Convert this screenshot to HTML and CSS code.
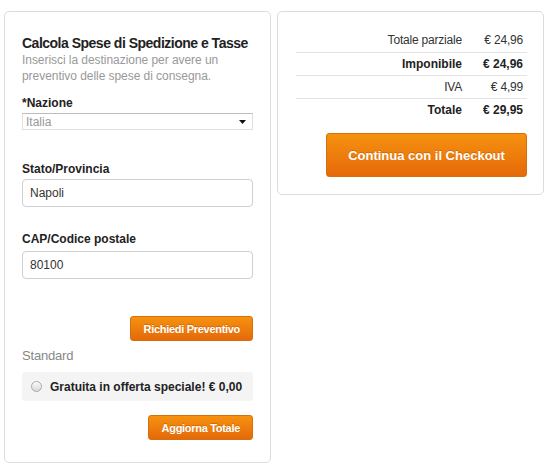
FILE: index.html
```html
<!DOCTYPE html>
<html>
<head lang="it">
    <meta charset="UTF-8">
    <title>Carrello</title>
    <link rel="stylesheet" href="styles.css">
</head>
<body>
<div class="cart">
    <!-- stima spedizione -->
    <div class="box shipping">
        <h2 class="box-title">Calcola Spese di Spedizione e Tasse</h2>
        <p class="hint">Inserisci la destinazione per avere un preventivo delle spese di consegna.</p>

        <label class="field-label">*Nazione</label>
        <div class="fake-select">
            <span>Italia</span>
            <svg width="7" height="4" viewBox="0 0 7 4"><path d="M0 0h7L3.5 4z" fill="#111"/></svg>
        </div>

        <label class="field-label first-input">Stato/Provincia</label>
        <input class="text-input" type="text" value="Napoli">

        <label class="field-label second-input">CAP/Codice postale</label>
        <input class="text-input" type="text" value="80100">

        <div class="actions quote-row">
            <button class="btn btn-small">Richiedi Preventivo</button>
        </div>

        <div class="method-name">Standard</div>
        <div class="method">
            <span class="radio"></span>
            <span>Gratuita in offerta speciale! € 0,00</span>
        </div>

        <div class="actions update-row">
            <button class="btn btn-small">Aggiorna Totale</button>
        </div>
    </div>

    <!-- totali -->
    <div class="box totals">
        <table class="totals-table">
            <tr><td>Totale parziale</td><td class="amount">€ 24,96</td></tr>
            <tr class="strong"><td>Imponibile</td><td class="amount">€ 24,96</td></tr>
            <tr><td>IVA</td><td class="amount">€ 4,99</td></tr>
            <tr class="strong last"><td>Totale</td><td class="amount">€ 29,95</td></tr>
        </table>
        <div class="actions checkout-row">
            <button class="btn btn-big">Continua con il Checkout</button>
        </div>
    </div>
</div>
</body>
</html>
```

FILE: styles.css
```css
*{ margin:0; padding:0; box-sizing:border-box; }
body{ background:#fff; font-family:"Liberation Sans", Arial, sans-serif; font-size:12px; color:#333; }
.cart{ display:flex; align-items:flex-start; gap:6px; padding:11px 0 0 4px; }
.box{ width:267px; border:1px solid #dcdcdc; border-radius:5px; background:#fff; }

/* colonna sinistra */
.shipping{ padding:23px 17px 22px; }
.box-title{ font-size:14px; line-height:17px; font-weight:bold; color:#222; letter-spacing:-0.5px; }
.hint{ color:#999; line-height:16px; letter-spacing:-0.05px; }
.field-label{ display:block; font-weight:bold; color:#222; line-height:16px; margin:11px 0 2px; }
.field-label.first-input{ margin-top:31px; margin-bottom:2px; }
.field-label.second-input{ margin-top:24px; margin-bottom:4px; }
.fake-select{ height:17px; display:flex; align-items:center; justify-content:space-between; padding:0 6px 0 3px; border:1px solid #e0e0e0; border-top-color:#bdbdbd; color:#999; }
.text-input{ display:block; width:100%; height:28px; padding:0 7px; border:1px solid #cfcfcf; border-radius:4px; font-family:inherit; font-size:12px; color:#333; outline:none; }
.actions{ display:flex; justify-content:flex-end; }
.quote-row{ margin-top:37px; }
.update-row{ margin-top:14px; }
.method-name{ font-size:13px; line-height:16px; color:#888; margin-top:7px; letter-spacing:-0.2px; }
.method{ display:flex; align-items:center; gap:8px; height:29px; margin-top:8px; padding-left:9px; background:#f4f4f4; border-radius:3px; font-weight:bold; color:#222; }
.radio{ width:11px; height:11px; border-radius:50%; border:1px solid #a9a9a9; background:linear-gradient(#fafafa, #d9d9d9); }

.btn{ border:1px solid #d5700c; border-radius:3px; color:#fff; font-family:inherit; font-weight:bold; background:linear-gradient(#f6920f, #e5690a); text-shadow:0 -1px 0 rgba(150,60,0,.35); cursor:pointer; }
.btn-small{ height:25px; padding:0 12px 0 13px; font-size:11px; letter-spacing:-0.3px; }

/* colonna destra */
.totals{ padding:17px 16px 17px 18px; }
.totals-table{ width:100%; border-collapse:collapse; }
.totals-table td{ height:23px; padding:0 5px 0 0; text-align:right; border-bottom:1px solid #e3e3e3; letter-spacing:-0.2px; }
.totals-table td.amount{ width:60px; padding-right:4px; }
.totals-table tr.last td{ border-bottom:0; }
.totals-table tr.strong td{ font-weight:bold; color:#222; letter-spacing:0; }
.checkout-row{ margin-top:12px; }
.btn-big{ width:201px; height:44px; font-size:13px; }
```
